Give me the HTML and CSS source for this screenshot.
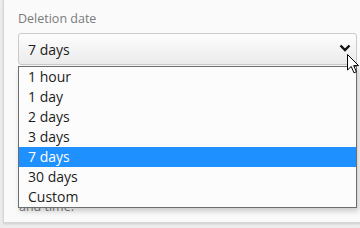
FILE: index.html
```html
<!DOCTYPE html>
<html lang="en">
<head>
  <meta charset="UTF-8" />
  <title>Deletion date</title>
  <link rel="stylesheet" href="styles.css">
</head>
<body>

<div class="card">
  <label class="field-label">Deletion date</label>

  <div class="select-wrap">
    <div class="select">
      <span>7 days</span>
      <svg class="chevron" width="12" height="8" viewBox="0 0 12 8">
        <path d="M1.5 1.5 L6 6 L10.5 1.5" fill="none" stroke="#111" stroke-width="2.4"/>
      </svg>
    </div>

    <!-- open list -->
    <ul class="options">
      <li>1 hour</li>
      <li>1 day</li>
      <li>2 days</li>
      <li>3 days</li>
      <li class="selected">7 days</li>
      <li>30 days</li>
      <li>Custom</li>
    </ul>

    <svg class="cursor" width="13" height="20" viewBox="0 0 13 20">
      <path d="M0.5 0.5 L0.5 16 L4.2 12.5 L7 18.8 L9.4 17.8 L6.7 11.6 L11.6 11.6 Z" fill="#fff" stroke="#000" stroke-width="1"/>
    </svg>
  </div>

  <p class="hint">The file is removed after this period, or at a custom date<br>and time.</p>
</div>

</body>
</html>
```

FILE: styles.css
```css
html, body {
  margin: 0;
  padding: 0;
  height: 228px;
  overflow: hidden;
  background: #ececec;
  font-family: 'Open Sans', sans-serif;
}

.card {
  margin: -1px 0 0 3px;
  width: 357px;
  height: 224px;
  box-sizing: border-box;
  padding: 10px 0 0 14px;
  background: #fafafa;
  border: 1px solid #d6d6d6;
  border-right: none;
  box-shadow: 0 1px 2px #0002;
}

.field-label {
  display: block;
  font-size: 12.5px;
  line-height: 18px;
  color: #7a7a7a;
  margin-bottom: 5px;
}

.select-wrap {
  position: relative;
  width: 339px;
}

.select {
  height: 32px;
  box-sizing: border-box;
  border: 1px solid #cacaca;
  border-radius: 3px;
  background: linear-gradient(#fdfdfd, #ebebeb);
  display: flex;
  align-items: center;
  justify-content: space-between;
  padding: 0 5px 0 9px;
  font-size: 14px;
  color: #1c1c1c;
}

.chevron {
  margin-top: -2px;
}

.options {
  position: absolute;
  top: 33px;
  left: 0;
  width: 339px;
  box-sizing: border-box;
  margin: 0;
  padding: 0;
  list-style: none;
  background: #fcfcfc;
  border: 1px solid #6e6e6e;
  box-shadow: 2px 3px 6px #0003;
  z-index: 5;
}

.options li {
  height: 20px;
  line-height: 20px;
  padding-left: 9px;
  font-size: 14px;
  color: #1c1c1c;
}

.options li.selected {
  background: #1e90ff;
  color: #fff;
}

.cursor {
  position: absolute;
  left: 329px;
  top: 21px;
  z-index: 10;
}

.hint {
  margin: 115px 0 0 1px;
  font-size: 12.5px;
  line-height: 18px;
  color: #7a7a7a;
}
```
